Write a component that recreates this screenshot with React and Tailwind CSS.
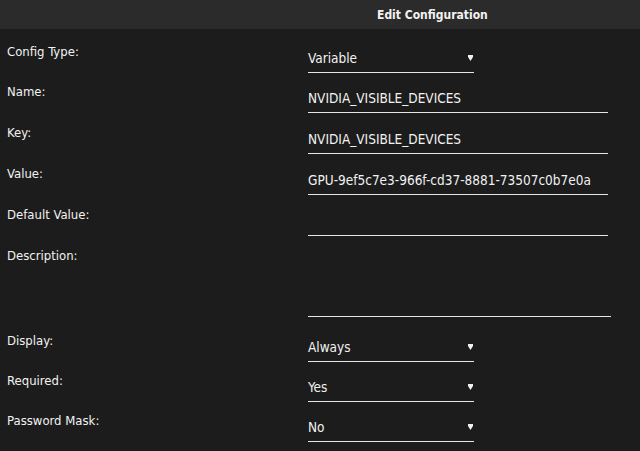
import React from 'react'

const font = { fontFamily: '"Liberation Sans Narrow", "DejaVu Sans Condensed", "Liberation Sans", sans-serif' }

function Caret() {
  return (
    <svg width="5" height="6" viewBox="0 0 5 6" className="absolute right-[1px] top-[6px]">
      <polygon points="0,0 5,0 5,2 2.5,6 0,2" fill="#f2f2f2" />
    </svg>
  )
}

function SelectBox({ value }) {
  return (
    <div className="relative mt-[12px] w-[166px] h-[24px] border-b border-[#e6e6e6] text-[13.5px] leading-[16px] text-[#f2f2f2]">
      <span className="block pt-[1px]">{value}</span>
      <Caret />
    </div>
  )
}

function TextBox({ value, tall }) {
  return (
    <div
      className={
        'mt-[12px] border-b border-[#e6e6e6] text-[13.5px] leading-[16px] text-[#f2f2f2] ' +
        (tall ? 'w-[303px] h-[64px]' : 'w-[300px] h-[24px]')
      }
    >
      <span className="block pt-[1px]">{value}</span>
    </div>
  )
}

function Row({ label, height, children }) {
  return (
    <div className="flex" style={{ height }}>
      <div className="w-[308px] pl-[7px] pt-[7px] text-[13px] leading-[16px] text-[#f2f2f2]">{label}</div>
      <div>{children}</div>
    </div>
  )
}

export default function App() {
  return (
    <div className="w-[640px] h-[451px] overflow-hidden bg-[#1c1c1c]" style={font}>
      <div className="h-[29px] bg-[#2b2b2b] flex items-center pl-[377px]">
        <span className="text-[12px] font-bold text-[#f2f2f2]">Edit Configuration</span>
      </div>
      <div className="pt-[8px]">
        <Row label="Config Type:" height={40}>
          <SelectBox value="Variable" />
        </Row>
        <Row label="Name:" height={41}>
          <TextBox value="NVIDIA_VISIBLE_DEVICES" />
        </Row>
        <Row label="Key:" height={41}>
          <TextBox value="NVIDIA_VISIBLE_DEVICES" />
        </Row>
        <Row label="Value:" height={41}>
          <TextBox value="GPU-9ef5c7e3-966f-cd37-8881-73507c0b7e0a" />
        </Row>
        <Row label="Default Value:" height={41}>
          <TextBox value="" />
        </Row>
        <Row label="Description:" height={85}>
          <TextBox value="" tall />
        </Row>
        <Row label="Display:" height={40}>
          <SelectBox value="Always" />
        </Row>
        <Row label="Required:" height={40}>
          <SelectBox value="Yes" />
        </Row>
        <Row label="Password Mask:" height={40}>
          <SelectBox value="No" />
        </Row>
      </div>
    </div>
  )
}
